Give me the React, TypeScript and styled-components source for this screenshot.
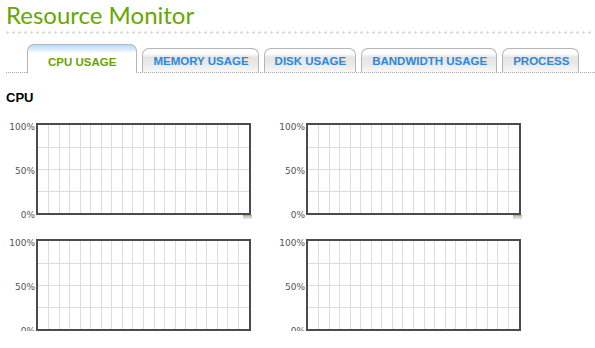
import styled, { createGlobalStyle } from 'styled-components';

const GlobalStyle = createGlobalStyle`
  body {
    margin: 0;
    background: #fff;
    font-family: 'Liberation Sans', Arial, sans-serif;
  }
`;

const Page = styled.div`
  padding-left: 6px;
`;

const Title = styled.h1`
  margin: 0;
  font-family: Lato, 'Open Sans', sans-serif;
  font-weight: 400;
  font-size: 24px;
  line-height: 29px;
  color: #66a800;
`;

const PlusRule = styled.div`
  margin: 2px 3px 0 0;
  height: 3px;
  background-image: linear-gradient(
      to right,
      transparent 1px,
      #d9dbcc 1px,
      #d9dbcc 2px,
      transparent 2px
    ),
    linear-gradient(to right, #d9dbcc 3px, transparent 3px);
  background-size: 6px 3px, 6px 1px;
  background-position: 0 0, 0 1px;
  background-repeat: repeat-x;
`;

const TabBar = styled.div`
  display: flex;
  align-items: flex-end;
  gap: 5px;
  margin-top: 10px;
  padding-left: 21px;
  border-bottom: 1px dotted #a8a8a8;
`;

const Tab = styled.div<{ $active?: boolean }>`
  box-sizing: border-box;
  padding: ${p => (p.$active ? '9px 20px 3px' : '4px 9px 3px 10px')};
  margin-bottom: ${p => (p.$active ? '-1px' : '0')};
  border: 1px solid #b4b4b4;
  border-bottom: none;
  border-radius: 7px 7px 0 0;
  font-size: 11.5px;
  font-weight: 700;
  line-height: 16px;
  white-space: nowrap;
  cursor: pointer;
  color: ${p => (p.$active ? '#68a400' : '#2b88d9')};
  background: ${p =>
    p.$active
      ? 'linear-gradient(to bottom, #bcdcfa 0, #d3e9fc 4px, #fff 8px, #fff 100%)'
      : 'linear-gradient(to bottom, #fff 0, #fff 20%, #e4e4e4 36%, #ebebeb 70%, #f8f8f8 100%)'};
`;

const SectionTitle = styled.h2`
  margin: 17px 0 0;
  font-size: 13px;
  font-weight: 700;
  line-height: 16px;
  color: #000;
`;

const ChartGrid = styled.div`
  display: grid;
  grid-template-columns: repeat(2, 245px);
  column-gap: 25px;
  row-gap: 24px;
  margin-top: 17px;
`;

const Chart = styled.div`
  display: grid;
  grid-template-columns: 30px 215px;
`;

const Axis = styled.div`
  display: flex;
  flex-direction: column;
  justify-content: space-between;
  align-items: flex-end;
  padding: 4px 1px 0 0;
`;

const AxisLabel = styled.span`
  height: 0;
  line-height: 0;
  font-family: 'DejaVu Sans', Verdana, sans-serif;
  font-size: 9px;
  color: #555;
  white-space: nowrap;
`;

const Plot = styled.div`
  position: relative;
  box-sizing: border-box;
  width: 215px;
  height: 92px;
  border: 2px solid #4b4b4b;
  background: #fff;

  svg {
    display: block;
    width: 100%;
    height: 100%;
  }
`;

const Handle = styled.div`
  position: absolute;
  right: -3px;
  bottom: -6px;
  width: 9px;
  height: 4px;
  border-top: 1px solid #8fc47c;
  background: linear-gradient(to bottom, #c4c4c4, #e6e6e6);
  box-sizing: border-box;
`;

const tabs = ['CPU USAGE', 'MEMORY USAGE', 'DISK USAGE', 'BANDWIDTH USAGE', 'PROCESS'];

function GridLines() {
  const w = 211;
  const h = 88;
  const cols = Array.from({ length: 19 }, (_, i) => ((i + 1) * w) / 20);
  const rows = [22, 44, 66];
  return (
    <svg viewBox={`0 0 ${w} ${h}`} preserveAspectRatio="none">
      {cols.map(x => (
        <line key={x} x1={x} y1={0} x2={x} y2={h} stroke="#dcdcdc" strokeWidth={1} shapeRendering="crispEdges" />
      ))}
      {rows.map(y => (
        <line key={y} x1={0} y1={y} x2={w} y2={y} stroke="#dcdcdc" strokeWidth={1} shapeRendering="crispEdges" />
      ))}
    </svg>
  );
}

function UsageChart() {
  return (
    <Chart>
      <Axis>
        <AxisLabel>100%</AxisLabel>
        <AxisLabel>50%</AxisLabel>
        <AxisLabel>0%</AxisLabel>
      </Axis>
      <Plot>
        <GridLines />
        <Handle />
      </Plot>
    </Chart>
  );
}

export default function App() {
  return (
    <>
      <GlobalStyle />
      <Page>
        <Title>Resource Monitor</Title>
        <PlusRule />
        <TabBar>
          {tabs.map((t, i) => (
            <Tab key={t} $active={i === 0}>
              {t}
            </Tab>
          ))}
        </TabBar>
        <SectionTitle>CPU</SectionTitle>
        <ChartGrid>
          {[0, 1, 2, 3].map(i => (
            <UsageChart key={i} />
          ))}
        </ChartGrid>
      </Page>
    </>
  );
}
